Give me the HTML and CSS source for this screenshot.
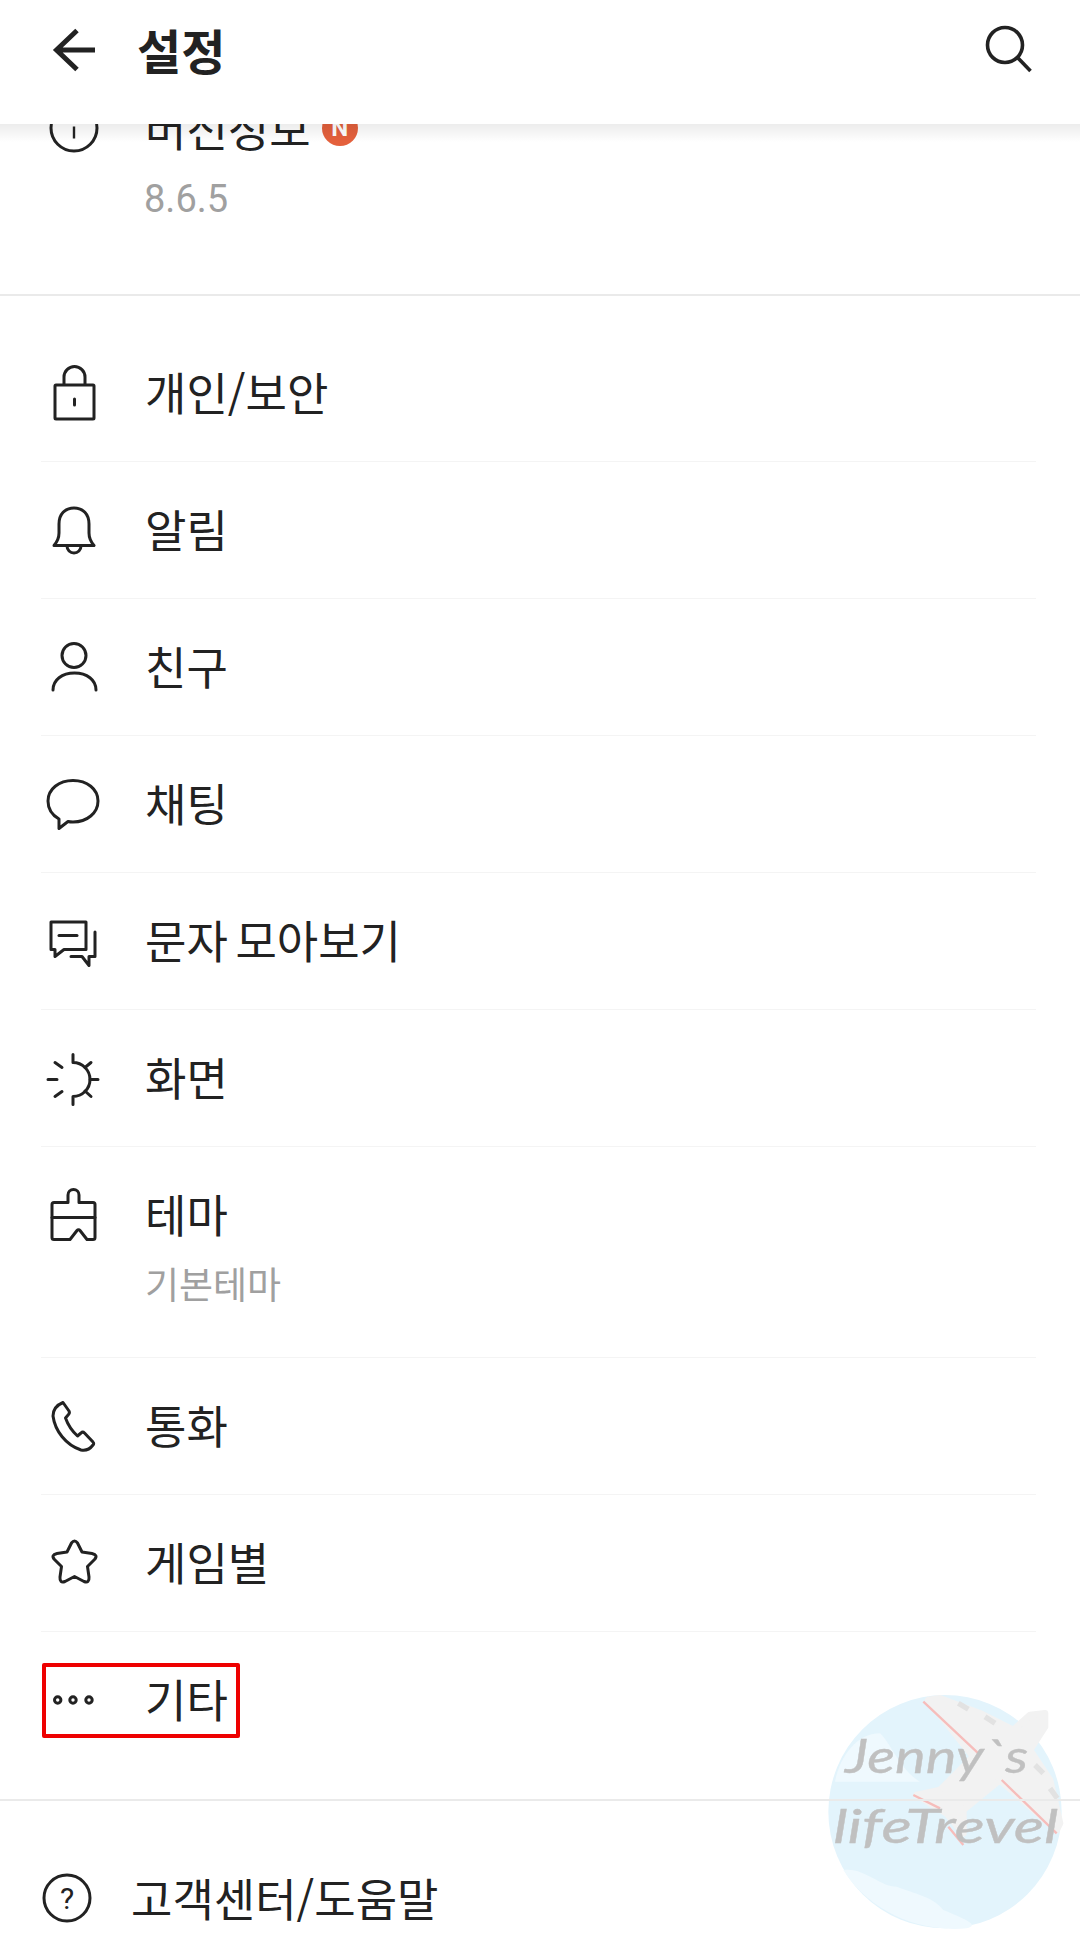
FILE: index.html
```html
<!DOCTYPE html>
<html lang="ko">
<head>
<meta charset="utf-8">
<title>설정</title>
<link rel="stylesheet" href="styles.css">
</head>
<body>
<div class="screen">
  <svg class="watermark" viewBox="60 60 780 750" aria-hidden="true">
    <circle class="wm-sky" cx="435" cy="425" r="350"/>
    <path class="wm-cloud" d="M105 335 C120 260 170 190 240 190 C270 215 300 300 360 335 Z"/>
    <path class="wm-cloud" d="M130 600 C190 590 240 650 290 650 C340 670 400 680 430 720 C500 750 540 765 500 775 C330 790 190 700 130 600 Z"/>
    <path class="wm-plane" d="M385 90 L420 85 L540 130 L640 180 L690 135 L735 130 L735 170 L690 240 L750 330 L780 460 L770 480 L600 330 L490 420 L490 490 L440 430 L350 375 L420 360 L520 260 Z"/>
    <path class="wm-red" d="M370 95 L535 250 M605 330 L770 490 M340 375 L420 415 M445 470 L490 525"/>
    <path class="wm-win" d="M475 100 L505 118 M555 140 L585 160 M705 285 L730 310 M750 355 L772 385"/>
    <text class="wm-text" x="135" y="310" textLength="550" lengthAdjust="spacingAndGlyphs">Jenny`s</text>
    <text class="wm-text" x="100" y="520" textLength="675" lengthAdjust="spacingAndGlyphs">lifeTrevel</text>
  </svg>

  <header class="topbar">
    <svg class="back" viewBox="0 0 50 50" aria-hidden="true"><path d="M7 25 H46 M28 5.5 L7.5 25 L28 44.5"/></svg>
    <h1 class="title">설정</h1>
    <svg class="search" viewBox="0 0 50 50" aria-hidden="true"><circle cx="21" cy="21" r="17.5"/><path d="M34 34 L46.5 47"/></svg>
  </header>

  <main class="content">
    <section class="version">
      <div class="row row-plain">
        <svg class="icon" viewBox="0 0 60 60" aria-hidden="true"><circle cx="30" cy="30" r="23"/><path class="thin" d="M30 28.5 V40.5"/></svg>
        <div class="label">
          <div class="name">버전정보<span class="badge">N</span></div>
          <div class="sub sub-num">8.6.5</div>
        </div>
      </div>
    </section>

    <section class="group">
      <div class="row">
        <svg class="icon" viewBox="0 0 60 60" aria-hidden="true"><path d="M12 22 H49 A1 1 0 0 1 50 23 V55 A1 1 0 0 1 49 56 H12 A1 1 0 0 1 11 55 V23 A1 1 0 0 1 12 22 Z M20 22 V14 A10.5 10.5 0 0 1 41 14 V22"/><path d="M30.5 36 V42"/></svg>
        <div class="name">개인/보안</div>
      </div>
      <div class="row">
        <svg class="icon" viewBox="0 0 60 60" aria-hidden="true"><path d="M10 45.5 C13 42 15 38 15 33 V24 C15 14 21 8 30 8 S45 14 45 24 V33 C45 38 47 42 50 45.5 Z"/><path d="M23 46 a7 7 0 0 0 14 0"/></svg>
        <div class="name">알림</div>
      </div>
      <div class="row">
        <svg class="icon" viewBox="0 0 60 60" aria-hidden="true"><circle cx="30" cy="18.5" r="12"/><path d="M9 53 C9 43 18 36 30.5 36 S52 43 52 53"/></svg>
        <div class="name">친구</div>
      </div>
      <div class="row">
        <svg class="icon" viewBox="0 0 60 60" aria-hidden="true"><path d="M15 45 C8 41 4 35 4 27 C4 15 15 6.5 29 6.5 S54 15 54 27 S43 48 29 48 C27 48 26 48 24 47.5 L15 54.5 Z"/></svg>
        <div class="name">채팅</div>
      </div>
      <div class="row">
        <svg class="icon" viewBox="0 0 60 60" aria-hidden="true"><path d="M7 11 H42 V38.5 H20 L11 45.5 V38.5 H7 Z"/><path d="M15 24.5 H33"/><path d="M27 45.5 H38 L45 54.5 V45.5 H51 V21"/></svg>
        <div class="name">문자 모아보기</div>
      </div>
      <div class="row">
        <svg class="icon" viewBox="0 0 60 60" aria-hidden="true"><path d="M29 6.5 V14.5 A17 17 0 0 1 29 48.5 V56.5"/><path d="M4 31.5 H13 M11 14.5 L18 19.5 M11 48.5 L18 43.5 M46 31.5 H54 M41 19.5 L47 14.5 M41 43 L47 48.5"/></svg>
        <div class="name">화면</div>
      </div>
      <div class="row">
        <svg class="icon" viewBox="0 0 60 60" aria-hidden="true"><path d="M8 32.5 H51"/><path d="M8 19.5 a2 2 0 0 1 2-2 H24 V10 a5.5 5.5 0 0 1 11 0 V17.5 H49 a2 2 0 0 1 2 2 V52.5 a2 2 0 0 1-2 2 H43 L36 45.5 a2 2 0 0 0-3 0 L26 54.5 H10 a2 2 0 0 1-2-2 Z"/></svg>
        <div class="label">
          <div class="name">테마</div>
          <div class="sub">기본테마</div>
        </div>
      </div>
      <div class="row">
        <svg class="icon" viewBox="0 0 60 60" aria-hidden="true"><path d="M19 6.5 L25 15 a3 3 0 0 1-.5 3.5 L21.5 22 C24 29 28 35 33.5 40 L37 37 a2.5 2.5 0 0 1 3.5 0 L49 46 a2 2 0 0 1 0 3 C46 53 42 55 37 54 C22 49 11 35 9 20 C9 14 13 9 19 6.5 Z"/></svg>
        <div class="name">통화</div>
      </div>
      <div class="row">
        <svg class="icon" viewBox="0 0 60 60" aria-hidden="true"><path d="M27.5 10 Q30.5 6 33.5 10 L38 19 L48 20.5 Q54.5 22 50.5 26.5 L43.5 33.5 L45 44 Q45.5 50.5 40 48.5 L30.5 43.5 L21 48.5 Q15.5 50.5 16 44 L17.5 33.5 L10.5 26.5 Q6.5 22 13 20.5 L23 19 Z"/></svg>
        <div class="name">게임별</div>
      </div>
      <div class="row row-plain">
        <svg class="icon" viewBox="0 0 60 60" aria-hidden="true"><circle cx="13.7" cy="30" r="3.2"/><circle cx="29" cy="30" r="3.2"/><circle cx="45" cy="30" r="3.2"/></svg>
        <div class="name">기타</div>
        <div class="highlight"></div>
      </div>
    </section>

    <section class="group group-last">
      <div class="row row-plain row-help">
        <svg class="icon" viewBox="0 0 60 60" aria-hidden="true"><circle cx="30" cy="30" r="23"/><text class="qmark" x="30" y="41">?</text></svg>
        <div class="name">고객센터/도움말</div>
      </div>
    </section>
  </main>
</div>
</body>
</html>
```
FILE: styles.css
```css
* { box-sizing: border-box; }
html, body { margin: 0; padding: 0; background: #fff; }
.screen {
  position: relative;
  width: 1080px;
  height: 1953px;
  overflow: hidden;
  background: #fff;
  color: #222;
  font-family: "Noto Sans CJK KR", "Noto Sans", sans-serif;
}
.topbar {
  position: absolute;
  top: 0;
  left: 0;
  z-index: 3;
  width: 100%;
  height: 124px;
  display: flex;
  align-items: center;
  padding: 0 0 24px 49px;
  background: #fff;
}
.topbar::after {
  content: "";
  position: absolute;
  left: 0;
  right: 0;
  top: 100%;
  height: 18px;
  background: linear-gradient(rgba(0,0,0,.075), rgba(0,0,0,0));
}
.back, .search { width: 50px; height: 50px; fill: none; stroke: #222; stroke-linecap: butt; }
.back { stroke-width: 5; flex: none; }
.search { stroke-width: 3.6; flex: none; margin-left: auto; margin-right: 46px; margin-top: -2px; }
.title { margin: -2px 0 0 38px; font-size: 48px; line-height: 56px; font-weight: 700; color: #222; }
.content { position: relative; z-index: 1; padding-top: 60px; }
.version { height: 234px; }
.group { border-top: 2px solid #eaeaea; padding-top: 29px; }
.group:not(.group-last) { padding-bottom: 31px; }
.row {
  position: relative;
  display: flex;
  align-items: flex-start;
  margin: 0 44px 0 41px;
  padding: 40px 0 40px;
  border-bottom: 1px solid #f4f4f4;
}
.group .row { padding: 39px 0 41px; }
.group .row-help { padding: 40px 0; }
.row-plain { border-bottom: 0; }
.icon {
  flex: none;
  width: 60px;
  height: 60px;
  margin: -2px 41px -2px 3px;
  fill: none;
  stroke: #222;
  stroke-width: 3;
  stroke-linejoin: round;
  stroke-linecap: round;
}
.group .icon { margin: -1px 41px -3px 3px; }
.thin { stroke-width: 2.4; stroke-linecap: butt; }
.name { font-size: 45px; line-height: 56px; word-spacing: -5px; color: #222; display: flex; align-items: center; }
.sub { margin-top: 18px; margin-bottom: 10px; font-size: 37px; line-height: 46px; color: #a0a0a0; }
.sub-num { font-family: Roboto, sans-serif; font-size: 38px; margin-top: 20px; margin-left: -1px; }
.badge {
  display: flex;
  align-items: center;
  justify-content: center;
  width: 36px;
  height: 36px;
  margin-left: 11px;
  border-radius: 50%;
  background: #e4603c;
  color: #fff;
  font-size: 24px;
  font-weight: 700;
  font-family: Roboto, sans-serif;
}
.group .row-help .icon { margin: -2px 34px -2px -4px; }
.qmark { fill: #222; stroke: none; font-family: Roboto, sans-serif; font-size: 30px; text-anchor: middle; }
.highlight {
  position: absolute;
  left: 1px;
  top: 31px;
  width: 198px;
  height: 75px;
  border: 4px solid #ee0000;
  border-radius: 2px;
}
.watermark {
  position: absolute;
  right: 0;
  bottom: 13px;
  width: 260px;
  height: 250px;
}
.wm-sky { fill: #e3f4fc; }
.wm-cloud { fill: #eff9fe; }
.wm-plane { fill: #f2f2f2; stroke: #f2f2f2; stroke-width: 20; stroke-linejoin: round; }
.wm-red { fill: none; stroke: #f6bdbb; stroke-width: 7; }
.wm-win { fill: none; stroke: #e2e2e2; stroke-width: 16; }
.wm-text { fill: #c0c0c0; stroke: #c0c0c0; stroke-width: 1; font-family: Lato, sans-serif; font-style: italic; font-size: 140px; }
```
